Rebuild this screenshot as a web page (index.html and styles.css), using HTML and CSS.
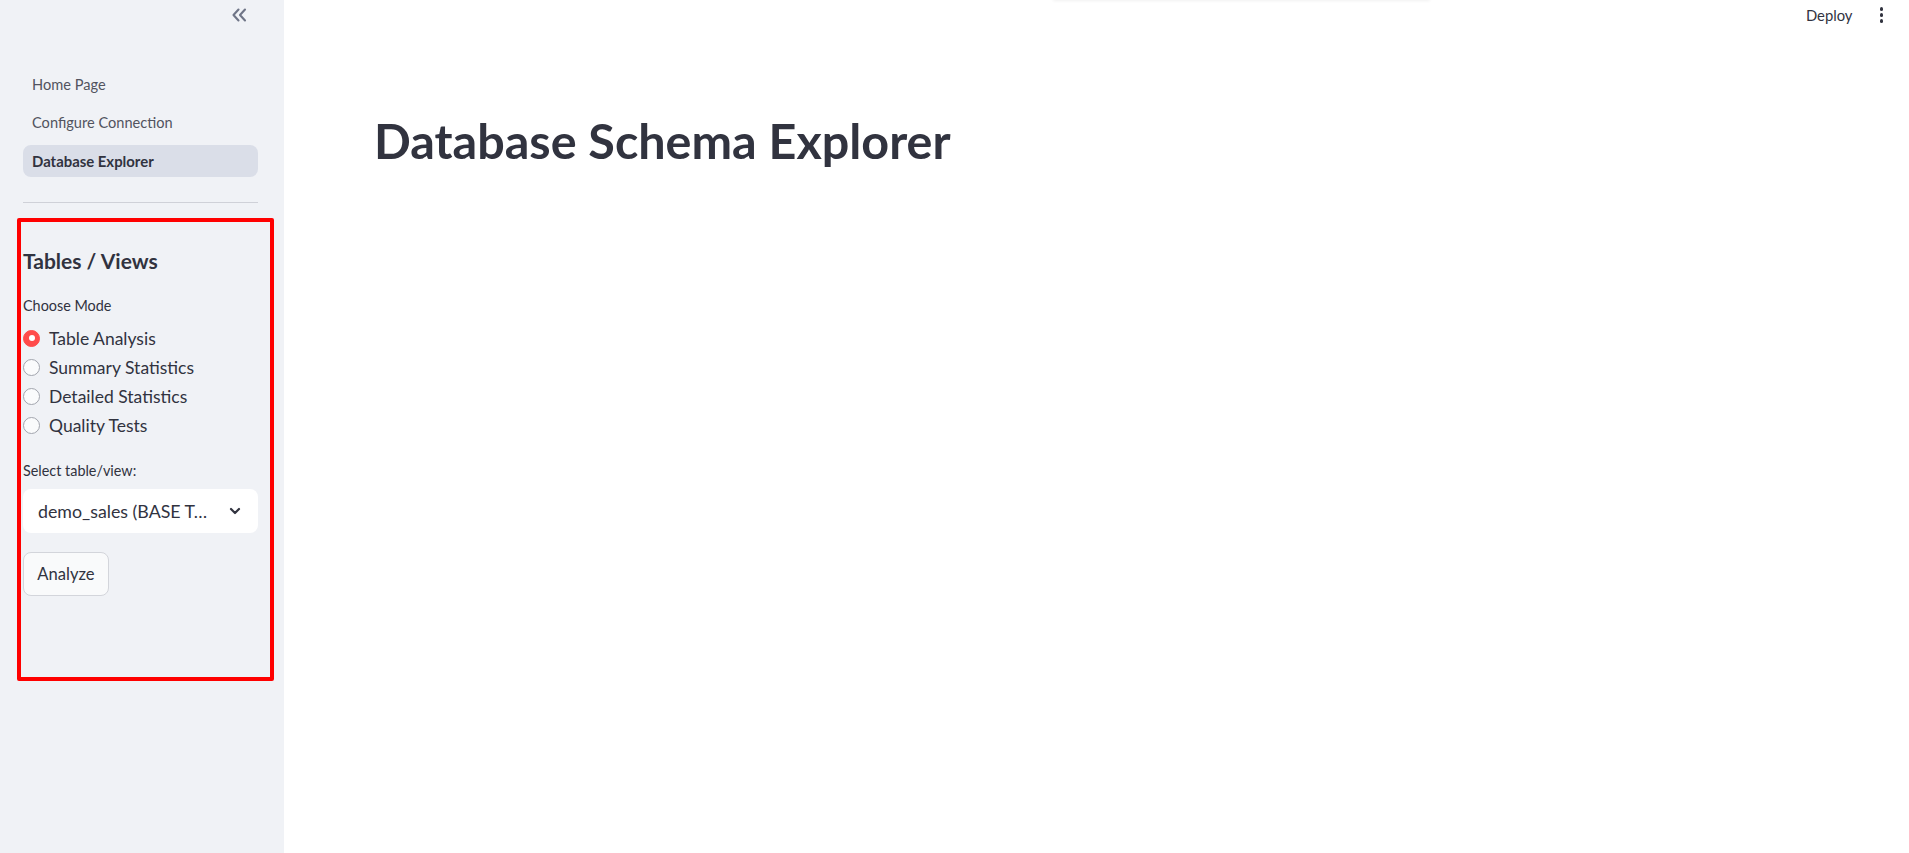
FILE: index.html
```html
<!DOCTYPE html>
<html lang="en">
<head>
<meta charset="utf-8">
<title>Database Schema Explorer</title>
<link rel="stylesheet" href="styles.css">
</head>
<body>
<div class="app">
  <aside class="sidebar">
    <div class="sb-header">
      <button class="collapse" aria-label="Collapse sidebar">
        <svg width="16" height="14" viewBox="0 0 16 14" fill="none" stroke="currentColor" stroke-width="2.1" stroke-linecap="round" stroke-linejoin="round"><path d="M7.5 1.5 2.5 7l5 5.5"/><path d="M14 1.5 9 7l5 5.5"/></svg>
      </button>
    </div>
    <nav class="nav">
      <a class="nav-link">Home Page</a>
      <a class="nav-link">Configure Connection</a>
      <a class="nav-link active">Database Explorer</a>
    </nav>
    <hr class="divider">
    <h3 class="sb-title">Tables / Views</h3>
    <div class="label">Choose Mode</div>
    <div class="radios">
      <div class="radio checked"><span class="dot"></span><span>Table Analysis</span></div>
      <div class="radio"><span class="dot"></span><span>Summary Statistics</span></div>
      <div class="radio"><span class="dot"></span><span>Detailed Statistics</span></div>
      <div class="radio"><span class="dot"></span><span>Quality Tests</span></div>
    </div>
    <div class="label select-label">Select table/view:</div>
    <div class="select">
      <span class="select-value">demo_sales (BASE T…</span>
      <svg class="select-chev" width="14" height="14" viewBox="0 0 14 14" fill="none" stroke="currentColor" stroke-width="2.2" stroke-linecap="round" stroke-linejoin="round"><path d="M3 5l4 4 4-4"/></svg>
    </div>
    <button class="btn">Analyze</button>
  </aside>
  <main class="main">
    <header class="topbar">
      <span class="deploy">Deploy</span>
      <span class="kebab"><i></i><i></i><i></i></span>
    </header>
    <h1 class="title">Database Schema Explorer</h1>
  </main>
</div>
<div class="annot"></div>
<div class="ghost"></div>
</body>
</html>
```
FILE: styles.css
```css
* { box-sizing: border-box; }
html, body { margin: 0; height: 100%; }
body {
  font-family: "Lato", "Noto Sans", sans-serif;
  color: #31333f;
  background: #ffffff;
  overflow: hidden;
}
.app {
  display: flex;
  height: 853px;
}
.sidebar {
  width: 284px;
  flex: none;
  background: #f0f2f6;
  padding: 0 26px 0 23px;
  display: flex;
  flex-direction: column;
  align-items: flex-start;
}
.sb-header {
  height: 69px;
  width: 100%;
  display: flex;
  justify-content: flex-end;
  align-items: flex-start;
  padding-top: 8px;
  padding-right: 11px;
}
.collapse {
  border: 0;
  background: transparent;
  color: #6f7587;
  padding: 0;
  width: 16px;
  height: 14px;
  display: flex;
}
.nav {
  width: 100%;
  display: flex;
  flex-direction: column;
  gap: 6px;
}
.nav-link {
  display: block;
  height: 32px;
  line-height: 32px;
  padding: 0 9px;
  border-radius: 8px;
  font-size: 14.6px;
  color: #52545f;
}
.nav-link.active {
  background: #dadee8;
  color: #31333f;
  font-weight: 700;
  font-size: 14.9px;
}
.divider {
  width: 100%;
  border: 0;
  border-top: 1px solid #cfd1d8;
  margin: 25px 0 0 0;
}
.sb-title {
  margin: 42px 0 0 0;
  font-size: 21px;
  line-height: 32px;
  font-weight: 700;
}
.label {
  font-size: 14.4px;
  line-height: 20px;
  margin-top: 19px;
}
.radios {
  margin-top: 10px;
  display: flex;
  flex-direction: column;
  gap: 5px;
}
.radio {
  height: 24px;
  display: flex;
  align-items: center;
  gap: 9px;
  font-size: 17.5px;
}
.dot {
  width: 17px;
  height: 17px;
  border-radius: 50%;
  border: 1px solid #a2a5ae;
  background: #fafbfc;
  flex: none;
  display: flex;
  align-items: center;
  justify-content: center;
}
.radio.checked .dot {
  background: #ff4b4b;
  border-color: #ff4b4b;
}
.radio.checked .dot::after {
  content: "";
  width: 6px;
  height: 6px;
  border-radius: 50%;
  background: #ffffff;
}
.select-label { margin-top: 24px; }
.select {
  margin-top: 8px;
  width: 100%;
  height: 44px;
  background: #ffffff;
  border-radius: 8px;
  display: flex;
  align-items: center;
  justify-content: space-between;
  padding: 0 16px 0 15px;
  font-size: 17.8px;
}
.select-chev { color: #31333f; }
.btn {
  margin-top: 19px;
  height: 44px;
  width: 86px;
  padding: 0;
  border: 1px solid #d3d5db;
  border-radius: 8px;
  background: #f9fafb;
  font-family: inherit;
  font-size: 16.6px;
  color: #31333f;
}
.main {
  flex: 1;
  display: flex;
  flex-direction: column;
  padding-left: 90px;
}
.topbar {
  height: 30px;
  display: flex;
  justify-content: flex-end;
  align-items: center;
  gap: 27px;
  padding-right: 26px;
}
.deploy {
  font-size: 14.8px;
}
.kebab {
  display: flex;
  flex-direction: column;
  gap: 2.5px;
}
.kebab i {
  display: block;
  width: 3.5px;
  height: 3.5px;
  border-radius: 50%;
  background: #31333f;
}
.title {
  margin: 80px 0 0 0;
  font-size: 48.5px;
  line-height: 60px;
  font-weight: 700;
}
.annot {
  position: absolute;
  left: 17px;
  top: 218px;
  width: 257px;
  height: 463px;
  border: 4px solid #ff0000;
  border-radius: 2px;
  pointer-events: none;
}
.ghost {
  position: absolute;
  left: 1053px;
  top: -20px;
  width: 377px;
  height: 20px;
  box-shadow: 0 1px 3px rgba(0,0,0,0.06);
  background: #fff;
}
```
